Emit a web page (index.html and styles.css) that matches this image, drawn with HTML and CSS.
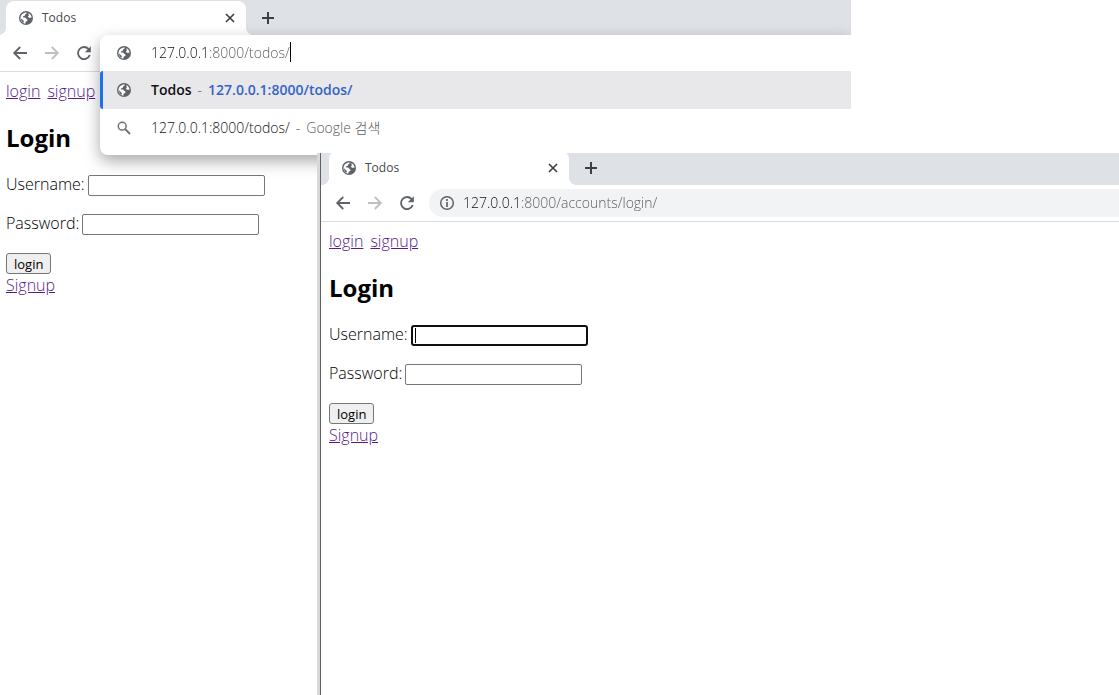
FILE: index.html
```html
<!DOCTYPE html>
<html lang="ko">
<head>
<meta charset="utf-8">
<title>Todos</title>
<link rel="stylesheet" href="styles.css">
</head>
<body>
<svg class="sprite" aria-hidden="true">
  <symbol id="globe" viewBox="0 0 16 16">
    <circle cx="8" cy="8" r="7" fill="#5f6368"/>
    <path d="M8.800 2.400C9 3.600 7.600 3.700 7.200 4.500c-.4.800-.2 1.300-.9 1.600-.8.300-1.500.2-1.500 1 0 .6 1 .4 1.900.5 1.200.1 1.100 1.200 2.200 1.600.8.300.9 1 .3 1.600-.7.700-1.700.7-1.700 1.600v1.200c-1.800-.2-3.400-1.200-4.300-2.700-.6-1-.8-2.100-.7-3.200C2.700 4.700 5.200 2.300 8.800 2.400z" fill="#fff"/>
    <path d="M10.600 3.300c1.700.9 2.800 2.400 3 4.300-.8.500-1.500-.1-2.200.1-.8.100-1.500-.2-1.500-.9 0-.8.800-.7.900-1.400.1-.8-.7-1-.2-2.100z" fill="#fff"/>
    <path d="M3 8.200 6 11.200l-.6 1.600C3.900 11.700 3 10.200 3 8.200z" fill="#5f6368"/>
  </symbol>
  <symbol id="back" viewBox="0 0 16 16"><path d="M15 8H2.500M8.200 2 2.200 8l6 6" fill="none" stroke="currentColor" stroke-width="1.800"/></symbol>
  <symbol id="forward" viewBox="0 0 16 16"><path d="M1 8h12.500M7.800 2l6 6-6 6" fill="none" stroke="currentColor" stroke-width="1.800"/></symbol>
  <symbol id="reload" viewBox="0 0 16 16"><path d="M12.600 4.200A6 6 0 1 0 13.700 10" fill="none" stroke="currentColor" stroke-width="1.900"/><path d="M14.800 1.200v6H8.800z" fill="currentColor"/></symbol>
  <symbol id="close" viewBox="0 0 10 10"><path d="m1 1 8 8M9 1 1 9" stroke="currentColor" stroke-width="1.700"/></symbol>
  <symbol id="plus" viewBox="0 0 12 12"><path d="M6 0v12M0 6h12" stroke="currentColor" stroke-width="2"/></symbol>
  <symbol id="search" viewBox="0 0 16 16"><circle cx="6.200" cy="6.200" r="3.900" fill="none" stroke="currentColor" stroke-width="1.500"/><path d="m9 9 5 5" stroke="currentColor" stroke-width="1.800"/></symbol>
  <symbol id="info" viewBox="0 0 16 16"><circle cx="8" cy="8" r="6.300" fill="none" stroke="currentColor" stroke-width="1.500"/><path d="M8 7v5M8 4v2" stroke="currentColor" stroke-width="1.700"/></symbol>
</svg>

<section class="window window-back">
  <header class="tabs">
    <div class="tab">
      <svg class="icon"><use href="#globe"/></svg>
      <span class="tab-title">Todos</span>
      <button class="tool close" aria-label="Close tab"><svg><use href="#close"/></svg></button>
    </div>
    <button class="tool plus" aria-label="New tab"><svg><use href="#plus"/></svg></button>
  </header>
  <div class="toolbar">
    <button class="tool" aria-label="Back"><svg class="icon"><use href="#back"/></svg></button>
    <button class="tool" aria-label="Forward" disabled><svg class="icon"><use href="#forward"/></svg></button>
    <button class="tool" aria-label="Reload"><svg class="icon"><use href="#reload"/></svg></button>
    <div class="omnibox">
      <div class="entry">
        <svg class="icon"><use href="#globe"/></svg>
        <span class="typed"><input class="url" aria-label="Address" value="127.0.0.1:8000/todos/"><i class="caret"></i></span>
      </div>
      <a class="entry selected" href="#todos"><svg class="icon"><use href="#globe"/></svg><span><b>Todos</b><span class="dash">-</span><b class="match">127.0.0.1:8000/todos/</b></span></a>
      <a class="entry" href="#search"><svg class="icon"><use href="#search"/></svg><span>127.0.0.1:8000/todos/<span class="dash">-</span><span class="hint">Google 검색</span></span></a>
    </div>
  </div>
  <main class="page">
    <nav class="links"><a href="#login">login</a><a href="#signup">signup</a></nav>
    <h2>Login</h2>
    <form>
      <p><label for="user-a">Username:</label><input class="field" id="user-a" type="text"></p>
      <p><label for="pass-a">Password:</label><input class="field" id="pass-a" type="password"></p>
      <button class="submit" type="button">login</button>
    </form>
    <a href="#signup">Signup</a>
  </main>
</section>

<section class="window window-front">
  <header class="tabs">
    <div class="tab">
      <svg class="icon"><use href="#globe"/></svg>
      <span class="tab-title">Todos</span>
      <button class="tool close" aria-label="Close tab"><svg><use href="#close"/></svg></button>
    </div>
    <button class="tool plus" aria-label="New tab"><svg><use href="#plus"/></svg></button>
  </header>
  <div class="toolbar">
    <button class="tool" aria-label="Back"><svg class="icon"><use href="#back"/></svg></button>
    <button class="tool" aria-label="Forward" disabled><svg class="icon"><use href="#forward"/></svg></button>
    <button class="tool" aria-label="Reload"><svg class="icon"><use href="#reload"/></svg></button>
    <div class="address"><svg class="icon"><use href="#info"/></svg><input class="url" aria-label="Address" value="127.0.0.1:8000/accounts/login/"></div>
  </div>
  <main class="page">
    <nav class="links"><a href="#login">login</a><a href="#signup">signup</a></nav>
    <h2>Login</h2>
    <form>
      <p><label for="user-b">Username:</label><span class="active"><input class="field focused" id="user-b" type="text"><i class="caret"></i></span></p>
      <p><label for="pass-b">Password:</label><input class="field" id="pass-b" type="password"></p>
      <button class="submit" type="button">login</button>
    </form>
    <a href="#signup">Signup</a>
  </main>
</section>
</body>
</html>
```
FILE: styles.css
```css
* { box-sizing: border-box; }
body {
  margin: 0;
  min-height: 100vh;
  position: relative;
  overflow: hidden;
  background: #fff;
  color: #000;
  font: 300 16px/22px "Open Sans", "Noto Sans CJK KR", sans-serif;
}
.sprite { position: absolute; width: 0; height: 0; }
.icon { width: 16px; height: 16px; flex: none; display: block; }

/* Overlapping browser windows */
.window { position: absolute; bottom: 0; overflow: hidden; isolation: isolate; background: #fff; }
.window-back { top: 0; left: -2px; width: calc(76vw + 3px); }
.window-front {
  top: 153px;
  left: 320px;
  right: 0;
  border-left: 1px solid #606060;
  box-shadow: -3px 0 0 #d8d8d8;
}

.tabs { display: flex; align-items: flex-end; height: 35px; padding-left: 8px; background: #dee1e6; }
.window-front .tabs { height: 32px; }
.tab {
  position: relative;
  display: flex;
  align-items: center;
  gap: 8px;
  width: 240px;
  height: 34px;
  padding: 0 11px 0 12px;
  border-radius: 8px 8px 0 0;
  background: #fff;
  color: #45494d;
  font-size: 12px;
  font-weight: 400;
}
/* Flared feet on both sides of the tab */
.tab::before, .tab::after { content: ""; position: absolute; bottom: 0; width: 8px; height: 8px; }
.tab::before { right: 100%; background: radial-gradient(circle at 0 0, #dee1e6 8px, #fff 8px); }
.tab::after { left: 100%; background: radial-gradient(circle at 100% 0, #dee1e6 8px, #fff 8px); }
.tab-title { flex: 1; }

.tool { display: block; flex: none; padding: 0; border: 0; background: none; color: #5f6368; }
.tool:disabled { color: #bcbec1; }
.tool svg { display: block; }
.close { color: #3c4043; }
.close svg { width: 10px; height: 10px; }
.plus { margin: 0 16px 11px; color: #3c4043; }
.plus svg { width: 12px; height: 12px; }

.toolbar {
  position: relative;
  display: flex;
  align-items: center;
  gap: 16px;
  height: 37px;
  padding-left: 14px;
  border-bottom: 1px solid #d9dbde;
  font-size: 14px;
}
.address {
  flex: 1;
  display: flex;
  align-items: center;
  gap: 8px;
  height: 28px;
  margin-left: -2px;
  padding-left: 10px;
  border-radius: 14px 0 0 14px;
  background: #f1f3f4;
  color: #5f6368;
}
.url {
  field-sizing: content;
  padding: 0;
  border: 0;
  outline: 0;
  background: linear-gradient(90deg, #101114 55px, #55595e 55px);
  background-clip: text;
  color: transparent;
  font: inherit;
}
.caret { width: 1px; background: #000; }

/* Suggestions drop down over the page */
.omnibox {
  position: absolute;
  z-index: 1;
  top: 0;
  left: 102px;
  right: 0;
  padding-bottom: 8px;
  border-radius: 8px 0 0 8px;
  background: #fff;
  box-shadow: 0 6px 16px rgb(0 0 0 / 35%);
}
.entry {
  display: flex;
  align-items: center;
  gap: 19px;
  height: 38px;
  padding-left: 16px;
  color: #101114;
  text-decoration: none;
}
div.entry { height: 36px; }
.entry .icon { color: #6d7175; }
.selected { background: #e8e8ea; border-left: 3px solid #1a73e8; border-radius: 3px 0 0 3px; padding-left: 13px; }
.entry b { font-weight: 600; }
.entry .match { color: #3563c4; }
.dash { margin: 0 6px; color: #55595e; }
.hint { color: #55595e; }
.typed { display: flex; }
.typed .caret { height: 20px; }

.page { padding: 8px; }
.page a { color: #551a8b; }
.links { display: flex; gap: 7px; }
h2 { margin: 20px 0 21px; font-size: 24px; line-height: 32px; font-weight: 700; }
p { display: flex; align-items: flex-start; gap: 3px; margin: 0 0 18px; }
label { line-height: 18px; }
.field { width: 177px; height: 21px; padding: 1px 2px; border: 1px solid #767676; border-radius: 2px; background: #fff; font: inherit; }
.focused { border: 2px solid #101010; border-radius: 3px; outline: 0; }
.active { position: relative; display: flex; }
.active .caret { position: absolute; left: 4px; top: 3px; height: 15px; }
.submit {
  display: block;
  height: 21px;
  padding: 0 7px;
  border: 1px solid #767676;
  border-radius: 3px;
  background: #efefef;
  color: #000;
  font: 13px/16px "Open Sans", sans-serif;
}
```
